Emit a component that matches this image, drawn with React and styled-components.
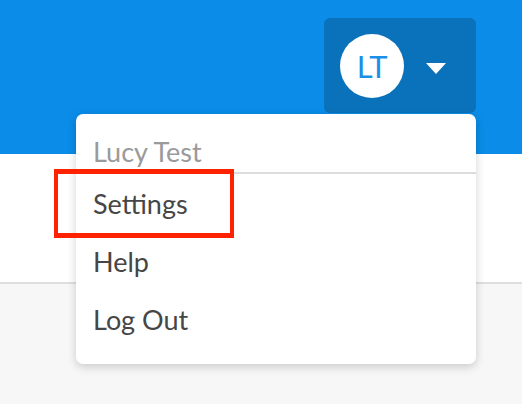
import React from "react";
import styled, { createGlobalStyle } from "styled-components";

const Global = createGlobalStyle`
  html, body { margin: 0; padding: 0; background: #f7f7f7; }
  body { font-family: Lato, "Open Sans", sans-serif; }
`;

const Page = styled.div`
  position: relative;
  width: 522px;
  height: 404px;
  overflow: hidden;
  background: #f7f7f7;
`;

const Header = styled.header`
  height: 154px;
  background: #0a8ce8;
  display: flex;
  justify-content: flex-end;
  align-items: flex-start;
  padding: 18px 46px 0 0;
  box-sizing: border-box;
`;

const UserButton = styled.div`
  width: 152px;
  height: 95px;
  box-sizing: border-box;
  background: #0a72bb;
  border-radius: 6px;
  display: flex;
  align-items: center;
  padding-left: 16px;
  gap: 22px;
`;

const Avatar = styled.div`
  width: 64px;
  height: 64px;
  border-radius: 50%;
  background: #fff;
  color: #1a8fe8;
  font-size: 31px;
  display: flex;
  align-items: center;
  justify-content: center;
  letter-spacing: -0.5px;
`;

const Caret = styled.div`
  width: 0;
  height: 0;
  border-left: 10px solid transparent;
  border-right: 10px solid transparent;
  border-top: 11px solid #fff;
  margin-top: 5px;
`;

const Band = styled.div`
  height: 128px;
  background: #fff;
  border-bottom: 2px solid #dedede;
`;

const Menu = styled.div`
  position: absolute;
  left: 76px;
  top: 114px;
  width: 400px;
  height: 250px;
  background: #fff;
  border-radius: 7px;
  box-shadow: 0 3px 10px rgba(0, 0, 0, 0.18);
`;

const MenuHead = styled.div`
  height: 60px;
  box-sizing: border-box;
  padding: 22px 0 0 17px;
  font-size: 27px;
  line-height: 32px;
  color: #9a9a9a;
  border-bottom: 2px solid #dcdcdc;
`;

const Item = styled.div`
  height: 58px;
  padding-left: 17px;
  display: flex;
  align-items: center;
  font-size: 27px;
  color: #464646;
`;

const Highlight = styled.div`
  position: absolute;
  left: 54px;
  top: 169px;
  width: 180px;
  height: 69px;
  box-sizing: border-box;
  border: 4px solid #ff2200;
  border-top-width: 5px;
  border-bottom-width: 5px;
`;

export default function App() {
  return (
    <>
      <Global />
      <Page>
        <Header>
          <UserButton>
            <Avatar>LT</Avatar>
            <Caret />
          </UserButton>
        </Header>
        <Band />
        <Menu>
          <MenuHead>Lucy Test</MenuHead>
          <Item>Settings</Item>
          <Item>Help</Item>
          <Item>Log Out</Item>
        </Menu>
        <Highlight />
      </Page>
    </>
  );
}
